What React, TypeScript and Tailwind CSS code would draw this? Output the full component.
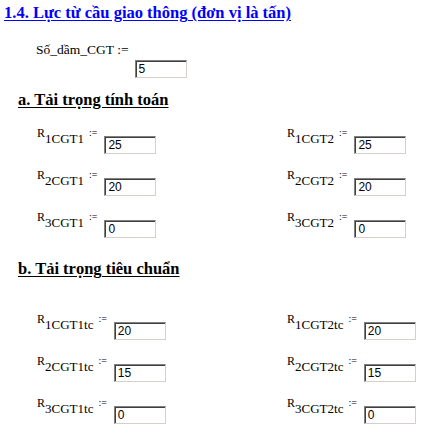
import React from "react";

type Item = { sub: string; value: string };

const calc: [Item, Item][] = [
  [{ sub: "1CGT1", value: "25" }, { sub: "1CGT2", value: "25" }],
  [{ sub: "2CGT1", value: "20" }, { sub: "2CGT2", value: "20" }],
  [{ sub: "3CGT1", value: "0" }, { sub: "3CGT2", value: "0" }],
];

const std: [Item, Item][] = [
  [{ sub: "1CGT1tc", value: "20" }, { sub: "1CGT2tc", value: "20" }],
  [{ sub: "2CGT1tc", value: "15" }, { sub: "2CGT2tc", value: "15" }],
  [{ sub: "3CGT1tc", value: "0" }, { sub: "3CGT2tc", value: "0" }],
];

// sunken win-classic edit box
function Box({ value }: { value: string }) {
  return (
    <div className="w-[52px] h-[18px] bg-white border border-t-[#808080] border-l-[#808080] border-r-[#d4d0c8] border-b-[#d4d0c8] shadow-[inset_1px_1px_0_#404040] pl-[3px] pt-[1px] text-[12px] leading-[14px] text-black font-['Liberation_Sans',Arial,sans-serif]">
      {value}
    </div>
  );
}

function Def({ item }: { item: Item }) {
  return (
    <div className="flex items-start">
      <div className="flex items-baseline leading-none text-black">
        <span className="text-[12px]">R</span>
        <span className="text-[13px] relative top-[6px]">{item.sub}</span>
        <span className="text-[10px] ml-[5px] relative top-[-1px]">:=</span>
      </div>
      <div className="mt-[10px] ml-[7px]">
        <Box value={item.value} />
      </div>
    </div>
  );
}

function Grid({ rows }: { rows: [Item, Item][] }) {
  return (
    <div className="flex flex-col gap-[14px] pl-[37px]">
      {rows.map((r, i) => (
        <div key={i} className="grid grid-cols-[250px_1fr]">
          <Def item={r[0]} />
          <Def item={r[1]} />
        </div>
      ))}
    </div>
  );
}

export default function App() {
  return (
    <div className="w-[440px] h-[427px] bg-white overflow-hidden font-['Liberation_Serif','Times_New_Roman',serif]">
      <div className="pl-[4px] pt-[3px] text-[16.5px] leading-[20px] font-bold text-[#0000ff] underline underline-offset-[2px]">
        1.4. Lực từ cầu giao thông (đơn vị là tấn)
      </div>

      <div className="flex items-start pl-[36px] mt-[20px]">
        <span className="text-[13.5px] leading-none">Số_dầm_CGT :=</span>
        <div className="mt-[17px] ml-[6px]">
          <Box value="5" />
        </div>
      </div>

      <div className="pl-[18px] mt-[13px] text-[16.5px] leading-[18px] font-bold underline underline-offset-[2px]">
        a. Tải trọng tính toán
      </div>
      <div className="mt-[17px]">
        <Grid rows={calc} />
      </div>

      <div className="pl-[18px] mt-[22px] text-[16.5px] leading-[18px] font-bold underline underline-offset-[2px]">
        b. Tải trọng tiêu chuẩn
      </div>
      <div className="mt-[34px]">
        <Grid rows={std} />
      </div>
    </div>
  );
}
